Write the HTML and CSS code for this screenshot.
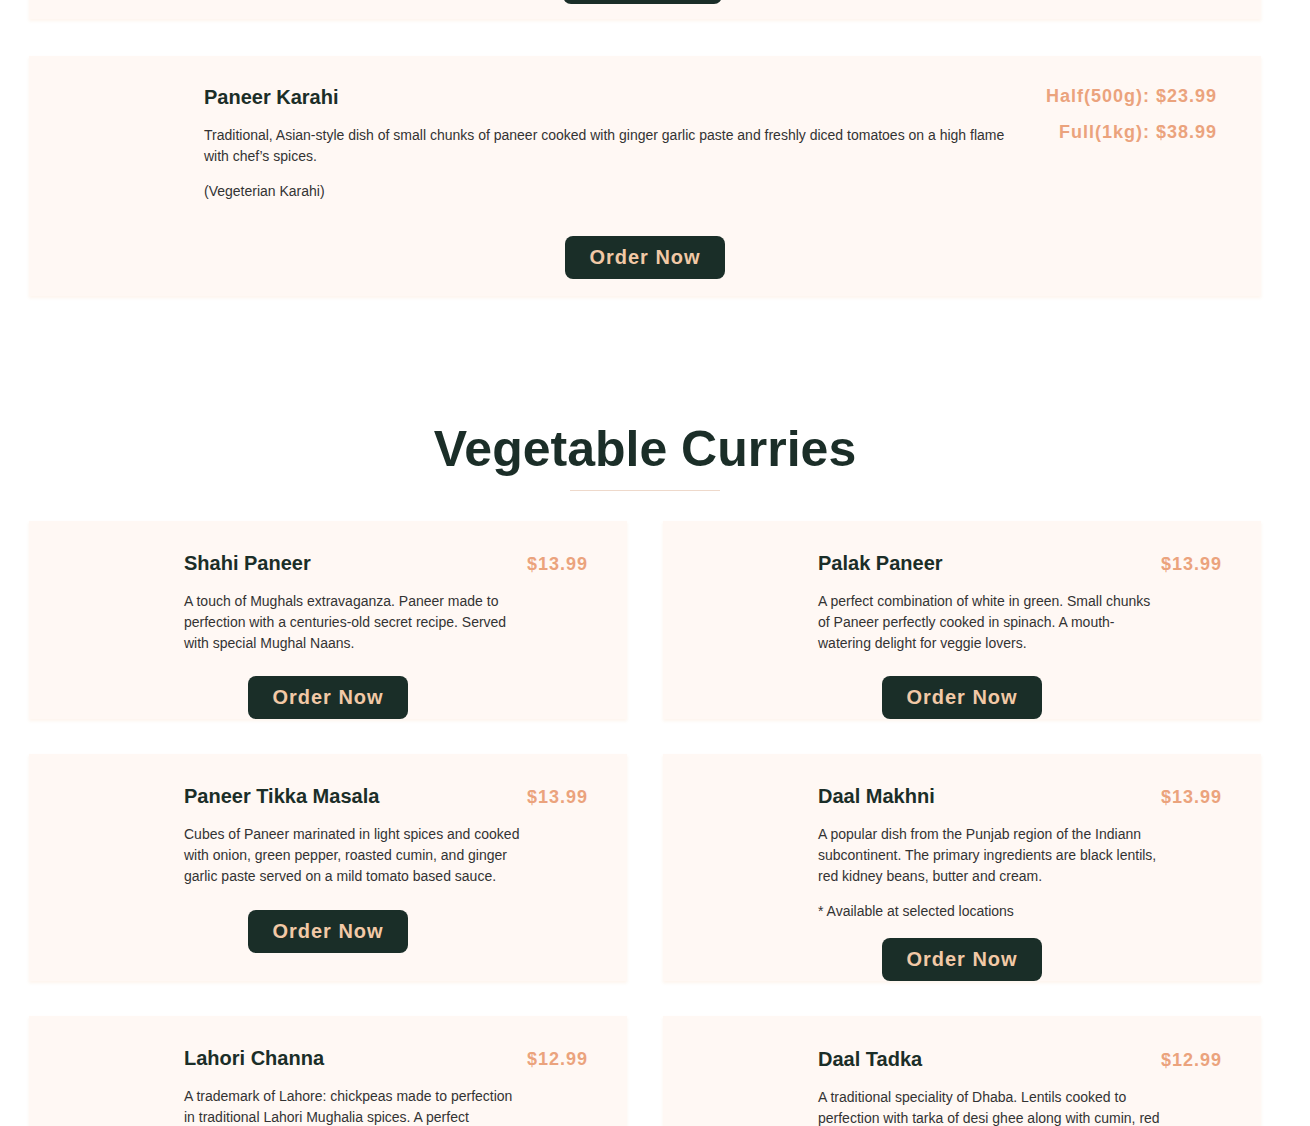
FILE: index.html
```html
<!DOCTYPE html>
<html lang="en">
<head>
<meta charset="utf-8">
<title>Menu - Vegetable Curries</title>
<link rel="stylesheet" href="styles.css">
</head>
<body>
<div class="page">
  <div class="card card-wide card-stub">
    <div class="btn-wrap"><a class="btn" href="#">Order Now</a></div>
  </div>

  <div class="card card-wide">
    <div class="item-row">
      <div class="media media-wide"></div>
      <div class="item-text">
        <h3 class="item-title">Paneer Karahi</h3>
        <p class="item-desc">Traditional, Asian-style dish of small chunks of paneer cooked with ginger garlic paste and freshly diced tomatoes on a high flame with chef’s spices.</p>
        <p class="item-desc">(Vegeterian Karahi)</p>
      </div>
      <div class="item-prices">
        <p class="price">Half(500g): $23.99</p>
        <p class="price">Full(1kg): $38.99</p>
      </div>
    </div>
    <div class="btn-wrap btn-wrap-wide"><a class="btn" href="#">Order Now</a></div>
  </div>

  <section class="section">
    <h2 class="section-title">Vegetable Curries</h2>
    <div class="section-rule"></div>

    <div class="grid">
      <div class="card">
        <div class="item-row">
          <div class="media"></div>
          <div class="item-text">
            <h3 class="item-title">Shahi Paneer</h3>
            <p class="item-desc">A touch of Mughals extravaganza. Paneer made to perfection with a centuries-old secret recipe. Served with special Mughal Naans.</p>
          </div>
          <div class="item-prices"><p class="price">$13.99</p></div>
        </div>
        <div class="btn-wrap"><a class="btn" href="#">Order Now</a></div>
      </div>

      <div class="card">
        <div class="item-row">
          <div class="media"></div>
          <div class="item-text">
            <h3 class="item-title">Palak Paneer</h3>
            <p class="item-desc">A perfect combination of white in green. Small chunks of Paneer perfectly cooked in spinach. A mouth-watering delight for veggie lovers.</p>
          </div>
          <div class="item-prices"><p class="price">$13.99</p></div>
        </div>
        <div class="btn-wrap"><a class="btn" href="#">Order Now</a></div>
      </div>

      <div class="card">
        <div class="item-row">
          <div class="media"></div>
          <div class="item-text">
            <h3 class="item-title">Paneer Tikka Masala</h3>
            <p class="item-desc">Cubes of Paneer marinated in light spices and cooked with onion, green pepper, roasted cumin, and ginger garlic paste served on a mild tomato based sauce.</p>
          </div>
          <div class="item-prices"><p class="price">$13.99</p></div>
        </div>
        <div class="btn-wrap"><a class="btn" href="#">Order Now</a></div>
      </div>

      <div class="card">
        <div class="item-row">
          <div class="media"></div>
          <div class="item-text">
            <h3 class="item-title">Daal Makhni</h3>
            <p class="item-desc">A popular dish from the Punjab region of the Indiann subcontinent. The primary ingredients are black lentils, red kidney beans, butter and cream.</p>
            <p class="item-desc item-note">* Available at selected locations</p>
          </div>
          <div class="item-prices"><p class="price">$13.99</p></div>
        </div>
        <div class="btn-wrap"><a class="btn" href="#">Order Now</a></div>
      </div>

      <div class="card">
        <div class="item-row">
          <div class="media"></div>
          <div class="item-text">
            <h3 class="item-title">Lahori Channa</h3>
            <p class="item-desc">A trademark of Lahore: chickpeas made to perfection in traditional Lahori Mughalia spices. A perfect companion for Naan or rice.</p>
          </div>
          <div class="item-prices"><p class="price">$12.99</p></div>
        </div>
        <div class="btn-wrap"><a class="btn" href="#">Order Now</a></div>
      </div>

      <div class="card">
        <div class="item-row">
          <div class="media"></div>
          <div class="item-text">
            <h3 class="item-title item-title-low">Daal Tadka</h3>
            <p class="item-desc">A traditional speciality of Dhaba. Lentils cooked to perfection with tarka of desi ghee along with cumin, red chillies and garlic.</p>
          </div>
          <div class="item-prices"><p class="price price-low">$12.99</p></div>
        </div>
        <div class="btn-wrap"><a class="btn" href="#">Order Now</a></div>
      </div>
    </div>
  </section>
</div>
</body>
</html>
```

FILE: styles.css
```css
* { box-sizing: border-box; }

html, body {
  margin: 0;
  padding: 0;
  background: #ffffff;
}

body {
  font-family: "Liberation Sans", Arial, sans-serif;
  color: #333333;
}

.page {
  width: 1232px;
  margin: 0 0 0 29px;
  padding-bottom: 60px;
}

.card {
  background: #fff8f4;
  box-shadow: 0 2px 3px rgba(252, 236, 224, 0.6);
  padding: 30px 39px 0 35px;
  display: flex;
  flex-direction: column;
}

.card-wide {
  padding: 29px 44px 17px 35px;
  margin-bottom: 37px;
}

.card-stub {
  padding-top: 0;
  padding-bottom: 15px;
  margin-top: -39px;
}

.item-row {
  display: flex;
  align-items: flex-start;
}

.media {
  flex: 0 0 120px;
}

.media-wide {
  flex-basis: 140px;
}

.item-text {
  flex: 1 1 auto;
  min-width: 0;
}

.card-wide .item-text {
  padding-right: 30px;
}

.item-title {
  margin: 0;
  font-size: 20px;
  line-height: 24px;
  font-weight: 700;
  color: #1b2e28;
}

.item-title + .item-desc {
  margin-top: 16px;
}

.item-desc {
  margin: 0 0 14px;
  font-size: 14px;
  line-height: 21px;
  color: #333333;
}

.item-note {
  margin-bottom: 7px;
}

.item-prices {
  flex: 0 0 auto;
  text-align: right;
  padding-top: 1px;
}

.price {
  margin: 0;
  font-size: 18px;
  line-height: 24px;
  font-weight: 700;
  letter-spacing: 1px;
  color: #eba37d;
}

.card-wide .item-prices {
  padding-top: 0;
}

.card-wide .price {
  line-height: 22px;
  margin-bottom: 14px;
}

.price-low { margin-top: 1px; }
.item-title-low { margin-top: 1px; }

.btn-wrap {
  display: flex;
  justify-content: center;
  margin-top: 8.5px;
  margin-left: 4px;
}

.btn-wrap-wide {
  margin-top: 19.5px;
  margin-left: 9px;
}

.card-stub .btn-wrap {
  margin-top: 0;
}

.btn {
  display: inline-block;
  background: #1a2e28;
  color: #f2c9a6;
  font-size: 20px;
  line-height: 23px;
  font-weight: 700;
  letter-spacing: 1px;
  padding: 10px 24px;
  border-radius: 8px;
  text-decoration: none;
}

.section {
  padding-top: 86px;
}

.section-title {
  margin: 0;
  text-align: center;
  font-size: 50px;
  line-height: 60px;
  font-weight: 700;
  color: #1b2e28;
}

.section-rule {
  width: 150px;
  height: 1px;
  background: #eed9cb;
  margin: 11px auto 30px;
}

.grid {
  display: grid;
  grid-template-columns: 1fr 1fr;
  column-gap: 36px;
  row-gap: 35px;
}
```
